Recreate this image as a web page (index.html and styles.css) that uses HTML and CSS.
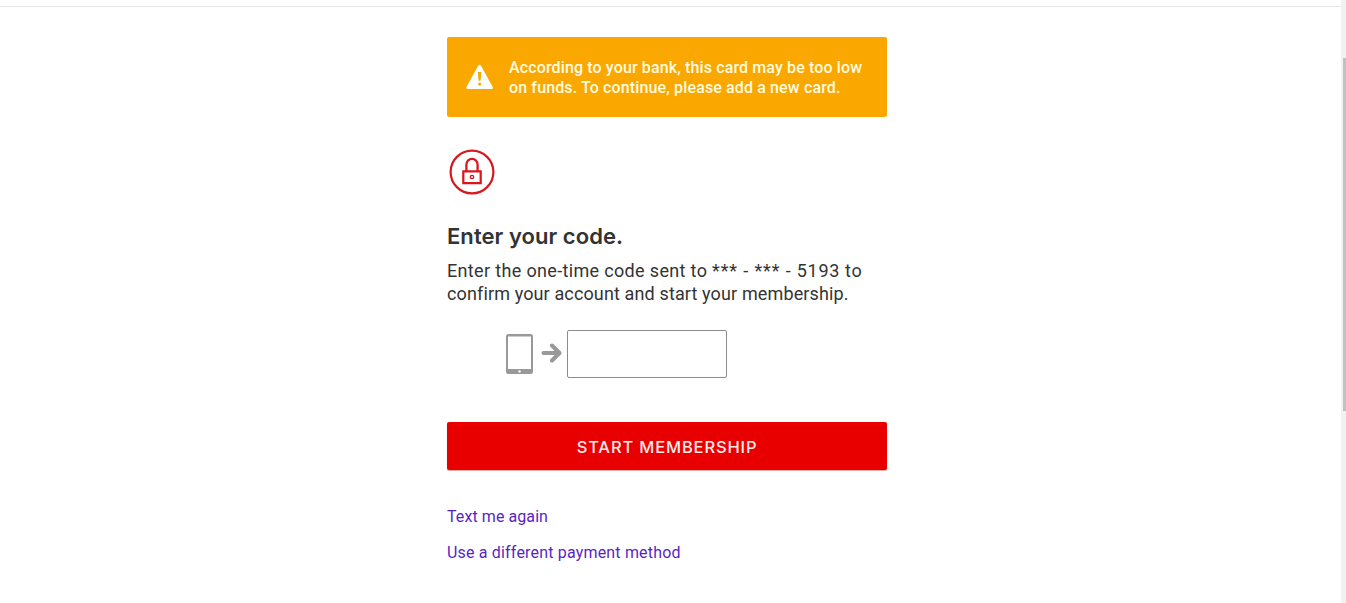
FILE: index.html
```
<!DOCTYPE html>
<html lang="en">
<head>
<meta charset="utf-8">
<title>Enter your code</title>
<link rel="stylesheet" href="styles.css">
</head>
<body>
<div class="page">
  <main class="content">
    <div class="alert">
      <svg class="alert-icon" width="28" height="26" viewBox="0 0 28 26"><path d="M13.6 2.2 25.4 23.6H1.8Z" fill="#fff" stroke="#fff" stroke-width="3" stroke-linejoin="round"/><path d="M11.8 8h3.6l-.8 8.7h-2Z" fill="#faa800"/><circle cx="13.6" cy="20" r="1.5" fill="#faa800"/></svg>
      <p class="alert-text">According to your bank, this card may be too low<br>on funds. To continue, please add a new card.</p>
    </div>
    <svg class="lock" width="50" height="50" viewBox="0 0 50 50" fill="none" stroke="#d9161c"><circle cx="25" cy="25" r="21.4" stroke-width="2.2"/><path d="M16.3 24.3h17.4v11.9H16.3Z" stroke-width="2.2"/><path d="M19.4 24v-6.2a5.6 6 0 0 1 11.2 0V24" stroke-width="2.3"/><circle cx="25" cy="30" r="1.7" stroke-width="1.3"/></svg>
    <h1 class="title">Enter your code.</h1>
    <p class="intro"><span class="intro-first">Enter the one-time code sent to </span><span class="phone-mask">*** - *** - </span><span class="phone-end">5193 to</span><br><span class="intro-second">confirm your account and start your membership.</span></p>
    <div class="code-row">
      <svg width="27" height="40" viewBox="0 0 27 40"><rect width="27" height="40" rx="2.5" fill="#999"/><path d="M2 2.5h23V35H2Z" fill="#fff"/><circle cx="13.5" cy="37.4" r="1.2" fill="#fff"/></svg>
      <svg class="arrow" width="22" height="20" viewBox="0 0 22 20" fill="none" stroke="#999" stroke-width="4"><path d="M2.5 10H18" stroke-linecap="round"/><path d="m11 2.5 7.5 7.5-7.5 7.5" stroke-linecap="round" stroke-linejoin="round"/></svg>
      <input class="code-input" type="text" aria-label="Code">
    </div>
    <button class="submit" type="button">START MEMBERSHIP</button>
    <a class="link link-resend" href="#">Text me again</a>
    <a class="link link-payment" href="#">Use a different payment method</a>
  </main>
  <div class="scrollbar"><div class="thumb"></div></div>
</div>
</body>
</html>
```
FILE: styles.css
```
* { box-sizing: border-box; }
body { margin: 0; background: #fff; color: #333; font-family: Roboto, "Liberation Sans", sans-serif; overflow: hidden; }
.page { display: flex; height: 603px; background: linear-gradient(#e6e6e6, #e6e6e6) 0 6px / 100% 1px no-repeat; }
.content { display: flex; flex-direction: column; align-items: flex-start; width: 440px; margin: 37px auto 0 447px; }
.alert { display: flex; align-items: center; width: 440px; height: 80px; padding-left: 19px; gap: 15px; border-radius: 2px; background: #faa800; color: #fffbe0; }
.alert-text { margin: 0; padding-top: 2px; font-size: 16px; line-height: 20px; font-weight: 500; letter-spacing: .13px; white-space: nowrap; }
.lock { display: block; margin-top: 30px; }
.title { margin: 24px 0 0; font-family: Inter, Roboto, sans-serif; font-size: 22px; line-height: 30px; font-weight: 600; letter-spacing: .05px; white-space: nowrap; }
.intro { margin: 8px 0 0; font-size: 18px; line-height: 23px; white-space: nowrap; }
.intro-first { letter-spacing: .34px; }
.phone-mask { letter-spacing: .87px; }
.phone-end { letter-spacing: .65px; }
.intro-second { letter-spacing: .13px; }
.code-row { display: flex; align-items: center; height: 48px; margin: 25px 0 0 59px; }
.arrow { margin: -2px 4px 0 8px; }
.code-input { width: 160px; height: 48px; border: 1px solid #8c8c8c; border-radius: 2px; background: #fff; }
.submit { width: 440px; height: 48px; margin-top: 44px; padding: 2px 0 0; border: 0; border-radius: 2px; background: #e80000; color: #ffeaea; font: 500 16.5px Inter, Roboto, sans-serif; letter-spacing: .85px; box-shadow: 0 1px 1px rgba(120, 0, 0, .35); }
.link { color: #5a1fc4; font-size: 16px; line-height: 20px; text-decoration: none; white-space: nowrap; }
.link-resend { margin-top: 37px; letter-spacing: .08px; }
.link-payment { margin-top: 16px; letter-spacing: .18px; }
.scrollbar { width: 5px; height: 603px; padding: 58px 0 0 2px; background: #f1f1f1; }
.thumb { height: 353px; background: #c1c1c1; }
```
